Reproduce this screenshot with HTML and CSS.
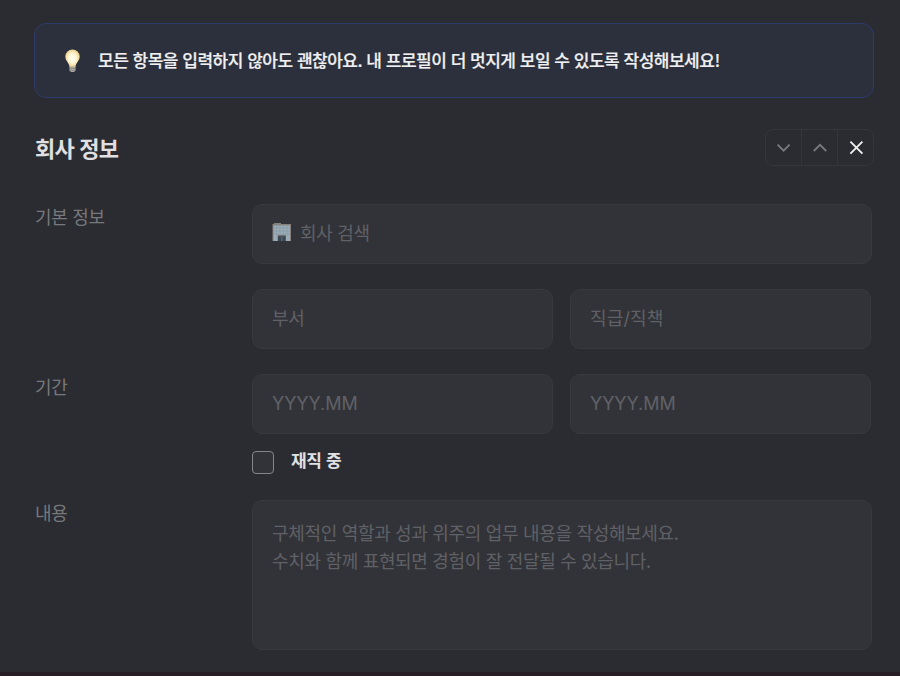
FILE: index.html
```html
<!DOCTYPE html>
<html lang="ko"><head><meta charset="utf-8"><title>회사 정보</title><link rel="stylesheet" href="styles.css"></head>
<body>
<main class="page">
<div class="notice"><svg class="bulb" viewBox="0 0 18 24"><defs><radialGradient id="glow"><stop offset="0" stop-color="#fffef2"/><stop offset=".55" stop-color="#fff6d5"/><stop offset="1" stop-color="#ecd08c"/></radialGradient></defs><path d="M8.5 .5a7.1 7.1 0 0 0-7.2 7c0 4.5 3.9 6 4.2 10.5h6c.3-4.5 4.2-6 4.2-10.5a7.1 7.1 0 0 0-7.2-7z" fill="url(#glow)"/><path d="M5.5 17.5h6v4L10 23H7l-1.5-1.5z" fill="#aaa99f"/><path d="M5.5 19.5h6M5.5 21.5h6" stroke="#85847d" stroke-width=".7"/></svg><p class="notice-text">모든 항목을 입력하지 않아도 괜찮아요. 내 프로필이 더 멋지게 보일 수 있도록 작성해보세요!</p></div>
<header class="head"><h1 class="title">회사 정보</h1>
<div class="actions"><button class="action"><svg viewBox="0 0 18 18"><path d="M2.6 5.6l6 6 6-6"/></svg></button><button class="action"><svg viewBox="0 0 18 18"><path d="M2.8 12L9 5.8l6.2 6.2"/></svg></button><button class="action close"><svg viewBox="0 0 18 18"><path d="M3.4 2.6l12 12M15.4 2.6l-12 12"/></svg></button></div></header>
<section class="row basic"><div class="label"><span>기본 정보</span></div><div class="fields">
<div class="field wide"><svg class="building" viewBox="0 0 20 20"><path d="M2 1h7v2H2z" fill="#85817e"/><path d="M.5 2h18.5v17H.5z" fill="#85807d"/><path d="M1.5 3.5h16.5V19H1.5z" fill="#99acb7"/><path d="M1.5 6h16.5M1.5 9h16.5M1.5 12h16.5M4.5 4v10M8 4v10M11.5 4v10M15 4v10" stroke="#82959f" stroke-width=".5"/><path d="M5.8 13.5h8V19h-8z" fill="#3c4850"/><path d="M5.8 13.8h8" stroke="#706d6b"/><path d="M9.8 15v4" stroke="#5e7583"/></svg><span>회사 검색</span></div>
<div class="pair"><div class="field"><span>부서</span></div><div class="field role"><span>직급/직책</span></div></div></div></section>
<section class="row period"><div class="label"><span>기간</span></div><div class="fields"><div class="pair"><div class="field date"><span>YYYY.MM</span></div><div class="field date"><span>YYYY.MM</span></div></div><div class="check"><i class="box"></i><span class="check-text">재직 중</span></div></div></section>
<section class="row content"><div class="label"><span>내용</span></div><div class="area"><p><span>구체적인 역할과 성과 위주의 업무 내용을 작성해보세요.</span></p><p><span>수치와 함께 표현되면 경험이 잘 전달될 수 있습니다.</span></p></div></section>
</main><div class="edge"></div>
</body></html>
```
FILE: styles.css
```css
*{box-sizing:border-box}
body{margin:0;height:676px;overflow:hidden;background:#2b2c31;font-family:"Noto Sans CJK KR",sans-serif;font-size:18px;letter-spacing:-.32px;display:flex;flex-direction:column}
.page{padding:23px 26px 0 34px;height:672px}
.edge{height:4px;background:#281e26}
p,h1{margin:0}
.notice{height:75px;border:1px solid #2e3b6b;border-radius:12px;background:#2c303c;display:flex;align-items:center;padding-left:29px}
.bulb{width:18px;height:24px;margin-right:16px}
.notice-text{font-size:17px;font-weight:500;color:#f0f0f2;letter-spacing:-.49px;white-space:nowrap;padding-bottom:2px;-webkit-text-stroke:.2px #f0f0f2}
.head{margin-top:31px;height:37px;display:flex;justify-content:space-between;align-items:center}
.title{font-size:22px;font-weight:700;color:#e0e0e3;line-height:37px;padding-left:1px;letter-spacing:-.8px}
.actions{width:109px;height:37px;border:1px solid #35363b;border-radius:8px;display:flex}
.action{flex:1;padding:0;border:0;background:none;display:grid;place-items:center;border-right:1px solid #35363b}
.action:last-child{border:0}
.action svg{width:18px;height:18px;fill:none;stroke:#78797e;stroke-width:1.9}
.action.close svg{stroke:#eee}
.row{display:grid;grid-template-columns:217px 620px;padding-left:1px}
.basic{margin-top:38px}.period{margin-top:25px}.content{margin-top:27px}
.label{color:#77787c;line-height:26px;margin-top:-1px}
.field{height:60px;border:1px solid #38393e;border-radius:10px;background:#323338;display:flex;align-items:center;padding:0 19px 5px;color:#606166}
.date,.role{font-family:Inter,"Noto Sans CJK KR",sans-serif;letter-spacing:0}
.role{letter-spacing:.15px}
.date{padding-bottom:1px;letter-spacing:-.05px}
.pair{display:grid;grid-template-columns:301px 301px;gap:17px}
.wide{margin-bottom:25px}
.building{width:20px;height:20px;margin-right:8px}
.check{height:22px;margin-top:17px;display:flex;align-items:center}
.box{width:22px;height:23px;border:1px solid #85858b;border-radius:4px;background:#323338;margin-right:17px}
.check-text{color:#e0e0e3;font-size:17px;font-weight:700;padding-bottom:6px}
.area{height:150px;border:1px solid #38393e;border-radius:10px;background:#323338;padding:17px 19px;color:#606166;line-height:28px}
```
